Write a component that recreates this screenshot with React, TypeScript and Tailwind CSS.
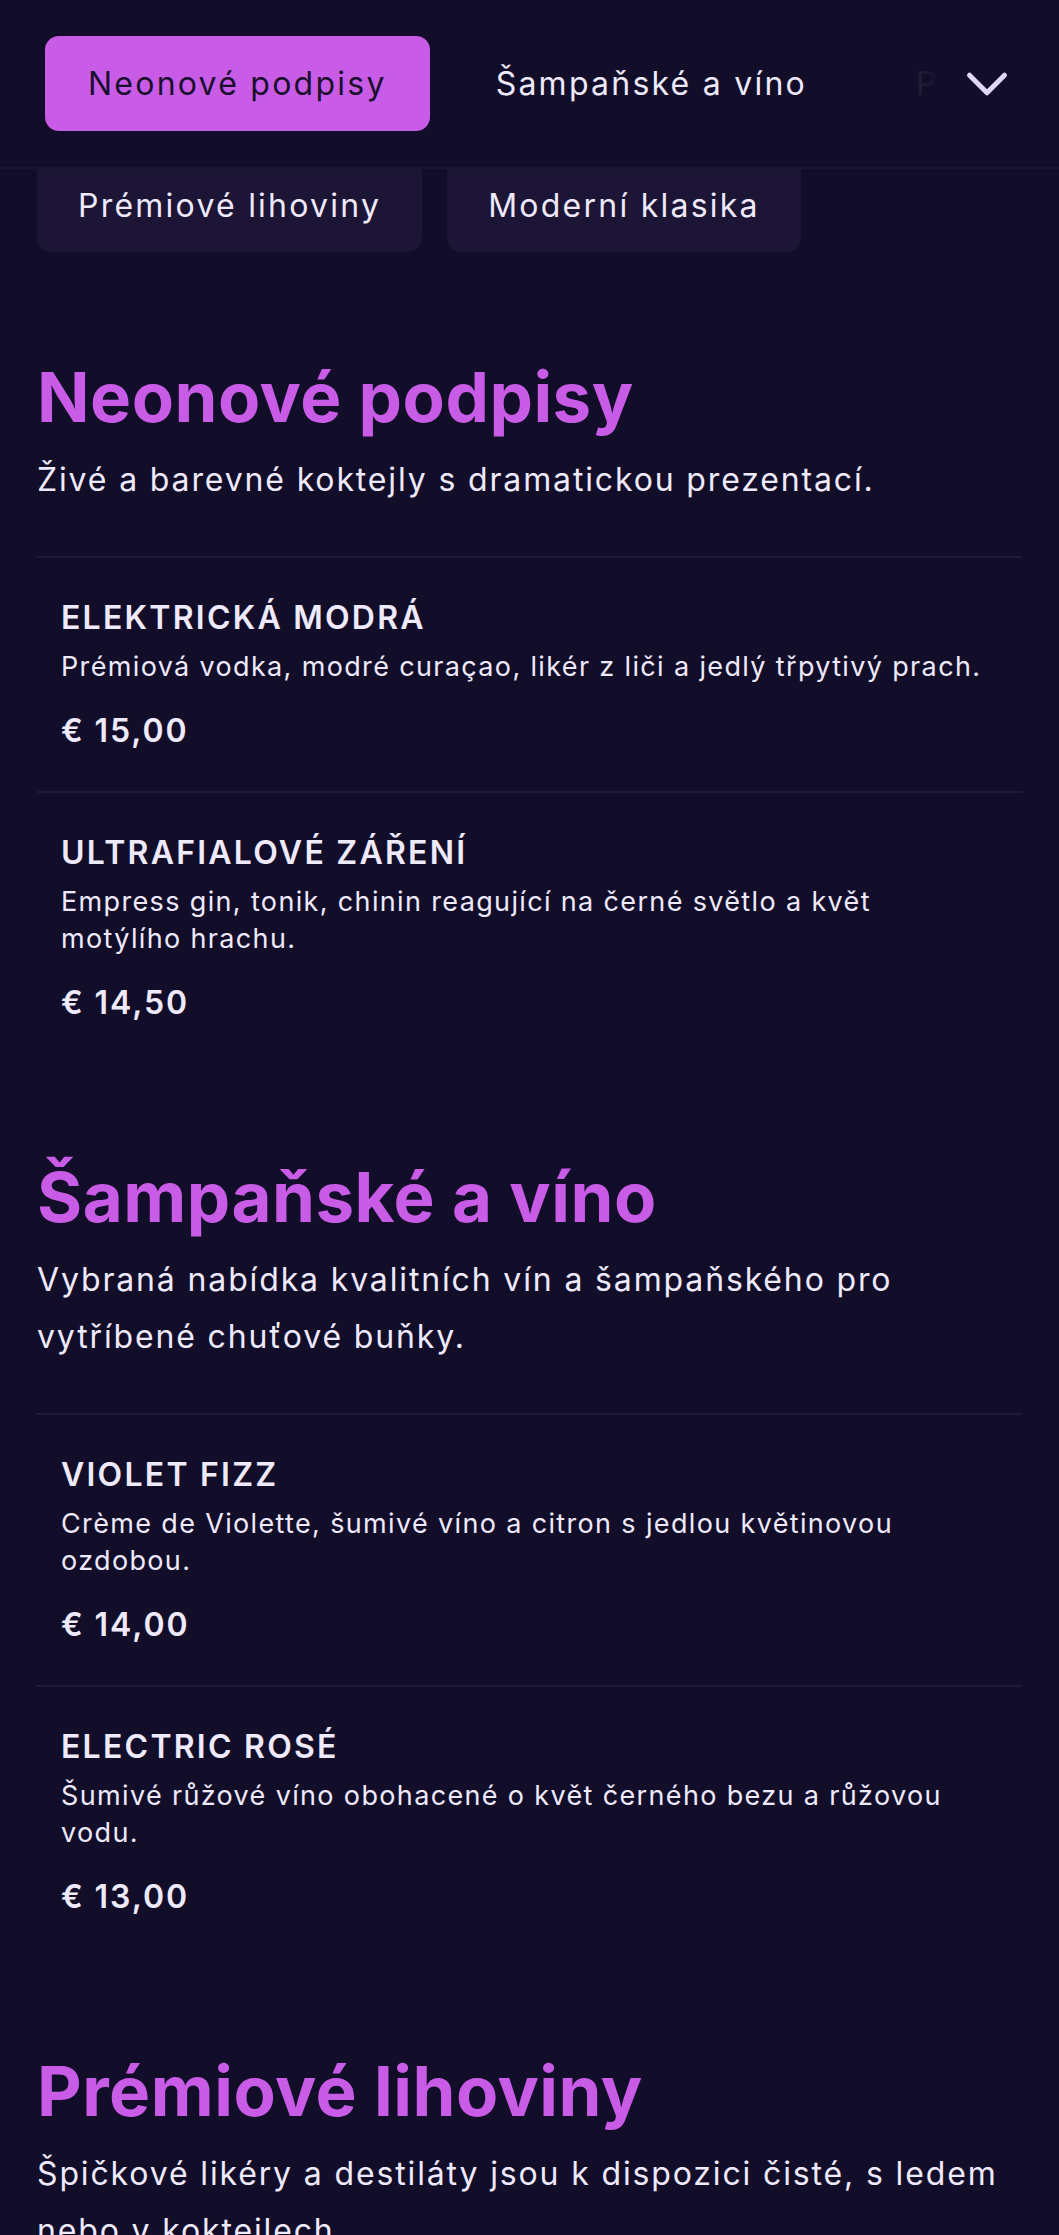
import { ChevronDown } from 'lucide-react';

interface Item {
  name: string;
  desc: string;
  price: string;
}

interface Section {
  title: string;
  desc: string;
  items: Item[];
}

const tabs = ['Neonové podpisy', 'Šampaňské a víno', 'Prémiové lihoviny', 'Moderní klasika'];

const sections: Section[] = [
  {
    title: 'Neonové podpisy',
    desc: 'Živé a barevné koktejly s dramatickou prezentací.',
    items: [
      {
        name: 'ELEKTRICKÁ MODRÁ',
        desc: 'Prémiová vodka, modré curaçao, likér z liči a jedlý třpytivý prach.',
        price: '€ 15,00',
      },
      {
        name: 'ULTRAFIALOVÉ ZÁŘENÍ',
        desc: 'Empress gin, tonik, chinin reagující na černé světlo a květ motýlího hrachu.',
        price: '€ 14,50',
      },
    ],
  },
  {
    title: 'Šampaňské a víno',
    desc: 'Vybraná nabídka kvalitních vín a šampaňského pro vytříbené chuťové buňky.',
    items: [
      {
        name: 'VIOLET FIZZ',
        desc: 'Crème de Violette, šumivé víno a citron s jedlou květinovou ozdobou.',
        price: '€ 14,00',
      },
      {
        name: 'ELECTRIC ROSÉ',
        desc: 'Šumivé růžové víno obohacené o květ černého bezu a růžovou vodu.',
        price: '€ 13,00',
      },
    ],
  },
  {
    title: 'Prémiové lihoviny',
    desc: 'Špičkové likéry a destiláty jsou k dispozici čisté, s ledem nebo v koktejlech.',
    items: [],
  },
];

export default function App() {
  return (
    <div className="min-h-screen bg-[#120e2a] text-[#efe9fc] font-['Inter','Noto_Sans',sans-serif] overflow-hidden">
      {/* sticky category bar */}
      <header className="sticky top-0 z-10 bg-[#120e2a] border-b-2 border-[#1a1531]">
        <div className="relative py-[36px] pl-[45px] overflow-hidden">
          <div className="flex gap-[23px] whitespace-nowrap">
            {tabs.map((t, i) => (
              <button
                key={t}
                className={
                  i === 0
                    ? 'h-[95px] px-[43px] rounded-[14px] bg-[#c95ce6] text-[#1a0f2e] text-[32px] tracking-[0.07em] shrink-0'
                    : 'h-[95px] px-[43px] rounded-[14px] text-[#efe9fc] text-[32px] tracking-[0.07em] shrink-0'
                }
              >
                {t}
              </button>
            ))}
          </div>
          <div className="absolute top-0 bottom-0 right-0 flex">
            <div className="w-[90px] bg-gradient-to-r from-[#120e2a]/50 via-[#120e2a]/85 to-[#120e2a]" />
            <div className="w-[119px] bg-[#120e2a] flex items-center pl-[12px]">
              <ChevronDown className="w-[70px] h-[70px] text-[#e0d6f7]" strokeWidth={1.7} />
            </div>
          </div>
        </div>
      </header>

      {/* second row of the wrapped tab list, tucked under the header */}
      <div className="-mt-[12px] flex gap-[25px] px-[37px]">
        <div className="h-[95px] px-[41px] rounded-[14px] bg-[#1d1536] flex items-center pt-[2px] text-[32px] tracking-[0.07em]">
          Prémiové lihoviny
        </div>
        <div className="h-[95px] px-[41px] rounded-[14px] bg-[#1d1536] flex items-center pt-[2px] text-[32px] tracking-[0.07em]">
          Moderní klasika
        </div>
      </div>

      <main className="px-[37px] pt-[105px] flex flex-col gap-[94px]">
        {sections.map((s) => (
          <section key={s.title}>
            <h2 className="text-[#c95ce6] text-[69px] leading-[80px] font-bold tracking-[0.5px]">
              {s.title}
            </h2>
            <p className="mt-[14px] text-[32px] leading-[57px] tracking-[0.058em]">{s.desc}</p>
            <div className="mt-[48px]">
              {s.items.map((it) => (
                <div key={it.name} className="border-t-2 border-[#1f1937] px-[24px] py-[40px]">
                  <h3 className="text-[32px] leading-[40px] font-semibold tracking-[0.07em]">{it.name}</h3>
                  <p className="mt-[10px] text-[27px] leading-[37px] tracking-[0.05em] pr-[10px]">{it.desc}</p>
                  <div className="mt-[26px] text-[32px] leading-[40px] font-semibold tracking-[0.06em]">
                    {it.price}
                  </div>
                </div>
              ))}
            </div>
          </section>
        ))}
      </main>
    </div>
  );
}
